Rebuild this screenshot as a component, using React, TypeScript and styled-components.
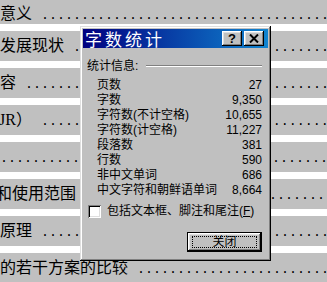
import React from "react";
import styled, { createGlobalStyle } from "styled-components";

const Global = createGlobalStyle`
  html, body { margin: 0; padding: 0; background: #fff; }
  body { width: 327px; height: 282px; overflow: hidden; }
`;

const Screen = styled.div`
  position: relative;
  width: 327px;
  height: 282px;
  overflow: hidden;
  background: #fff;
`;

const Doc = styled.div`
  display: flex;
  flex-direction: column;
  gap: 7px;
`;

const Line = styled.div<{ $h: number }>`
  height: ${(p) => p.$h}px;
  line-height: ${(p) => p.$h}px;
  background: #c0c0c0;
  white-space: nowrap;
  overflow: hidden;
  color: #000;
`;

const Entry = styled.span<{ $shift?: number }>`
  display: inline-block;
  margin-left: ${(p) => p.$shift ?? 0}px;
  font: 16px "Liberation Serif", "Noto Sans CJK SC", serif;
`;

const Leader = styled.span<{ $gap?: number }>`
  margin-left: ${(p) => p.$gap ?? 9}px;
  font: 13.33px "Liberation Mono", monospace;
`;

const Dialog = styled.div`
  position: absolute;
  left: 80px;
  top: 26px;
  width: 191px;
  height: 235px;
  box-sizing: border-box;
  padding: 3px;
  background: #c0c0c0;
  box-shadow: inset -1px -1px #000, inset 1px 1px #dfdfdf,
    inset -2px -2px #808080, inset 2px 2px #fff;
  display: flex;
  flex-direction: column;
  font: 12px "Liberation Sans", "Noto Sans CJK SC", sans-serif;
  color: #000;
`;

const TitleBar = styled.div`
  height: 19px;
  display: flex;
  align-items: center;
  justify-content: space-between;
  background: linear-gradient(90deg, #000080, #1084d0);
  padding: 0 4px 0 2px;
`;

const Title = styled.span`
  color: #fff;
  font: 17px "Noto Sans CJK SC", sans-serif;
  letter-spacing: 3px;
  line-height: 19px;
`;

const Caption = styled.div`
  display: flex;
  gap: 2px;
`;

const CapBtn = styled.div`
  width: 20px;
  height: 15px;
  box-sizing: border-box;
  background: #c0c0c0;
  box-shadow: inset -1px -1px #000, inset 1px 1px #fff,
    inset -2px -2px #808080, inset 2px 2px #dfdfdf;
  display: flex;
  align-items: center;
  justify-content: center;
  font: bold 13px "Liberation Sans", sans-serif;
  line-height: 15px;
  color: #000;
`;

const Body = styled.div`
  flex: 1;
  display: flex;
  flex-direction: column;
  padding: 11px 6px 0 4px;
`;

const GroupHead = styled.div`
  display: flex;
  align-items: center;
  gap: 8px;
  height: 14px;
  line-height: 14px;
`;

const Etched = styled.div`
  flex: 1;
  height: 0;
  border-top: 1px solid #808080;
  border-bottom: 1px solid #fff;
`;

const Stats = styled.div`
  margin: 5px 0 0 10px;
  display: grid;
  grid-template-columns: 1fr auto;
  grid-auto-rows: 15px;
  line-height: 15px;
`;

const Value = styled.span`
  text-align: right;
`;

const CheckRow = styled.div`
  margin-top: 7px;
  height: 13px;
  display: flex;
  align-items: center;
  gap: 6px;
  padding-left: 1px;
  line-height: 13px;
`;

const Box = styled.div`
  width: 13px;
  height: 13px;
  box-sizing: border-box;
  background: #fff;
  box-shadow: inset 1px 1px #808080, inset -1px -1px #fff,
    inset 2px 2px #000, inset -2px -2px #dfdfdf;
`;

const ButtonRow = styled.div`
  margin-top: 14px;
  display: flex;
  justify-content: flex-end;
`;

const CloseBtn = styled.div`
  position: relative;
  width: 75px;
  height: 20px;
  box-sizing: border-box;
  border: 1px solid #000;
  background: #c0c0c0;
  box-shadow: inset -1px -1px #000, inset 1px 1px #fff,
    inset -2px -2px #808080, inset 2px 2px #dfdfdf;
  display: flex;
  align-items: center;
  justify-content: center;
  line-height: 18px;
  &::after {
    content: "";
    position: absolute;
    inset: 3px 4px;
    border: 1px dotted #000;
  }
`;

const dots = ".".repeat(60);

const lines: { h: number; text: string; shift?: number; gap?: number }[] = [
  { h: 24, text: "意义" },
  { h: 30, text: "发展现状" },
  { h: 30, text: "容" },
  { h: 30, text: "JR）", shift: -1 },
  { h: 30, text: "", gap: 0 },
  { h: 30, text: "和使用范围", shift: -4 },
  { h: 30, text: "原理" },
  { h: 30, text: "的若干方案的比较" },
];

const stats: [string, string][] = [
  ["页数", "27"],
  ["字数", "9,350"],
  ["字符数(不计空格)", "10,655"],
  ["字符数(计空格)", "11,227"],
  ["段落数", "381"],
  ["行数", "590"],
  ["非中文单词", "686"],
  ["中文字符和朝鲜语单词", "8,664"],
];

export default function App() {
  return (
    <Screen>
      <Global />
      <Doc>
        {lines.map((l, i) => (
          <Line key={i} $h={l.h}>
            <Entry $shift={l.shift}>{l.text}</Entry>
            <Leader $gap={l.gap}>{dots}</Leader>
          </Line>
        ))}
      </Doc>
      <Dialog>
        <TitleBar>
          <Title>字数统计</Title>
          <Caption>
            <CapBtn>?</CapBtn>
            <CapBtn>
              <svg width="10" height="9" viewBox="0 0 10 9">
                <path d="M1 0.5 L9 8.5 M9 0.5 L1 8.5" stroke="#000" strokeWidth="2" />
              </svg>
            </CapBtn>
          </Caption>
        </TitleBar>
        <Body>
          <GroupHead>
            <span>统计信息:</span>
            <Etched />
          </GroupHead>
          <Stats>
            {stats.map(([k, v]) => (
              <React.Fragment key={k}>
                <span>{k}</span>
                <Value>{v}</Value>
              </React.Fragment>
            ))}
          </Stats>
          <CheckRow>
            <Box />
            <span>
              包括文本框、脚注和尾注(<u>F</u>)
            </span>
          </CheckRow>
          <ButtonRow>
            <CloseBtn>关闭</CloseBtn>
          </ButtonRow>
        </Body>
      </Dialog>
    </Screen>
  );
}
